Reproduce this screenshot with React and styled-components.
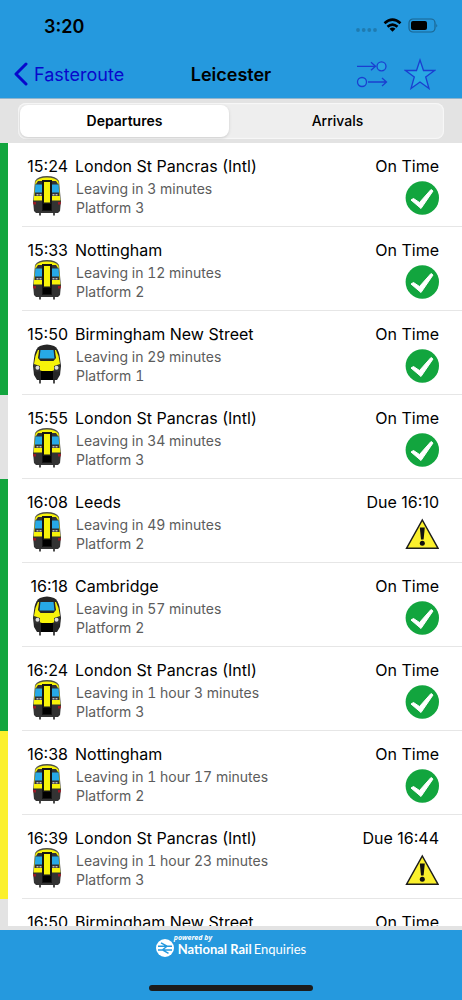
import React, { useState } from "react";
import styled, { createGlobalStyle } from "styled-components";

const services = [
  { time: "15:24", to: "London St Pancras (Intl)", leaving: "3 minutes", platform: 3, train: "sprinter", line: "#12a53e" },
  { time: "15:33", to: "Nottingham", leaving: "12 minutes", platform: 2, train: "sprinter", line: "#12a53e" },
  { time: "15:50", to: "Birmingham New Street", leaving: "29 minutes", platform: 1, train: "turbostar", line: "#12a53e" },
  { time: "15:55", to: "London St Pancras (Intl)", leaving: "34 minutes", platform: 3, train: "sprinter", line: "#e3e3e3" },
  { time: "16:08", to: "Leeds", leaving: "49 minutes", platform: 2, train: "sprinter", line: "#12a53e", due: "16:10" },
  { time: "16:18", to: "Cambridge", leaving: "57 minutes", platform: 2, train: "turbostar", line: "#12a53e" },
  { time: "16:24", to: "London St Pancras (Intl)", leaving: "1 hour 3 minutes", platform: 3, train: "sprinter", line: "#12a53e" },
  { time: "16:38", to: "Nottingham", leaving: "1 hour 17 minutes", platform: 2, train: "sprinter", line: "#fbf02d" },
  { time: "16:39", to: "London St Pancras (Intl)", leaving: "1 hour 23 minutes", platform: 3, train: "sprinter", line: "#fbf02d", due: "16:44" },
  { time: "16:50", to: "Birmingham New Street", leaving: "1 hour 34 minutes", platform: 1, train: "turbostar", line: "#e3e3e3" },
];

// icons
const Sprinter = () => (
  <svg width="28" height="40" viewBox="0 0 28 40" aria-hidden="true">
    <path d="M2 5Q5 0 14 0T26 5L28 26H0Z" fill="#4f5045" />
    <path d="M2.5 5.500Q6 1.500 14 1.500T25.500 5.500L27.500 26H.5Z" fill="#f7f30a" />
    <path d="M5 5H23L25 8H3Z" fill="#333" />
    <path d="M2.500 8H10V20H1.500Z M18 8H25.500L26.500 20H18Z" fill="#333" />
    <path d="M2.500 8.500H9V16.500H1.800Z M19 8.500H25.500L26.200 16.500H19Z" fill="#27a9e6" />
    <path d="M3.500 18.800H8.500M19.500 18.800H24.500" stroke="#bbb" strokeWidth="1.400" strokeDasharray="2 1" />
    <path d="M0 24.500H28L27 35L25 37H3L1 35Z" fill="#333" />
    <path d="M0 26H3V28.500H.5Z M25 26H28L27.500 28.500H25Z" fill="#9b1825" />
    <path d="M9 4H19V35H9Z" fill="#151515" />
    <path d="M11 6H17V26.500H11Z" fill="#f7f30a" />
    <path d="M10 28H18V34H10Z" fill="#000" />
    <path d="M7 37V39.500M21 37V39.500" stroke="#222" strokeWidth="1.600" />
  </svg>
);

const Turbostar = () => (
  <svg width="28" height="40" viewBox="0 0 28 40" aria-hidden="true">
    <path d="M7 2Q14 -1 21 2Q25 4 26.500 11L28 22L27 31L24 36H4L1 31L0 22L1.500 11Q3 4 7 2Z" fill="#262626" />
    <path d="M5 6H23L25.500 12L27 20L24.500 25L19 27H9L3.500 25L1 20L2.500 12Z" fill="#f7f30a" />
    <path d="M6.500 3H21.500L23 14L20.500 17H7.500L5 14Z" fill="#262626" />
    <path d="M7.500 6H20.500L21.500 14.500H6.500Z" fill="#27a9e6" />
    <path d="M1 20L7 22V27L3 28L1 26Z M27 20L21 22V27L25 28L27 26Z" fill="#333" />
    <circle cx="4.500" cy="23.700" r="2" fill="#ddd" />
    <circle cx="23.500" cy="23.700" r="2" fill="#ddd" />
    <path d="M8 27H20V36H8Z" fill="#000" />
    <path d="M7 35V39.500M21 35V39.500" stroke="#222" strokeWidth="1.600" />
  </svg>
);

const Tick = () => (
  <svg width="34" height="34" viewBox="0 0 34 34" aria-hidden="true">
    <circle cx="17.300" cy="17" r="16.700" fill="#12a53e" />
    <path
      d="M6 19L8.500 17.500L14.500 21.500L26 8.500L28 10L16 27.500Z"
      fill="#fff"
      stroke="#fff"
      strokeLinejoin="round"
    />
  </svg>
);

const Warning = () => (
  <svg width="34" height="34" viewBox="0 0 34 34" aria-hidden="true">
    <path d="M17.300 3L33 31.200H1.600Z" fill="#fbf02d" stroke="#1c1c1c" strokeWidth="1.500" />
    <path d="M14.800 10.500H19.800L18.600 22.500H16Z" fill="#111" />
    <circle cx="17.300" cy="26.300" r="2.500" fill="#111" />
  </svg>
);

const StatusIcons = () => (
  <svg width="82" height="18" viewBox="0 0 82 18" aria-hidden="true">
    <g fill="#1f7bb0">
      <circle cx="2" cy="13" r="1.900" />
      <circle cx="7.700" cy="13" r="1.900" />
      <circle cx="13.300" cy="13" r="1.900" />
      <circle cx="19" cy="13" r="1.900" />
    </g>
    <g fill="none" stroke="#000" strokeWidth="2.600">
      <path d="M28.500 6.300Q36.500 -.9 44.500 6.300" />
      <path d="M31.500 9.800Q36.500 5.400 41.500 9.800" />
    </g>
    <path d="M33.500 11.800Q36.500 9.300 39.500 11.800L36.500 14.800Z" />
    <rect x="53" y="2" width="26" height="13" rx="4" fill="none" stroke="#1b6590" strokeWidth="1.200" />
    <rect x="55" y="4" width="16" height="9" rx="2" />
    <path d="M80.300 6.500Q82 8.500 80.300 10.500Z" fill="#1b6590" />
  </svg>
);

const BackArrow = () => (
  <svg width="14" height="24" viewBox="0 0 14 24" aria-hidden="true">
    <path d="M12 2L2 12L12 22" fill="none" stroke="#0808cc" strokeWidth="3" strokeLinecap="round" strokeLinejoin="round" />
  </svg>
);

const SwapIcon = () => (
  <svg width="32" height="28" viewBox="0 0 32 28" fill="none" stroke="#1b3fd0" strokeWidth="1.300" aria-hidden="true">
    <path d="M1 6.300H19M15 2.300L19.500 6.300L15 10.300M12 22H30M26 18L30.500 22L26 26" />
    <circle cx="25.500" cy="6.300" r="4.500" fill="#2aa5e2" />
    <circle cx="6" cy="22" r="4.500" fill="#2aa5e2" />
  </svg>
);

const StarIcon = () => (
  <svg width="32" height="32" viewBox="0 0 32 32" aria-hidden="true">
    <path
      d="M16 2L19.500 12.500H30.500L21.700 19L25 30.500L16 24L7 30.500L10.300 19L1.500 12.500H12.500Z"
      fill="#2aa9e4"
      stroke="#1b3fd0"
      strokeWidth="1.300"
    />
  </svg>
);

const RailLogo = () => (
  <svg width="18" height="18" viewBox="0 0 18 18" aria-hidden="true">
    <circle cx="9" cy="9" r="9" fill="#fff" />
    <path d="M2 7.200H16M2 11H16M5 3.800L11 7.200L6.500 11L12.500 14.400" fill="none" stroke="#2599de" strokeWidth="1.500" />
  </svg>
);

const Service = ({ service }) => (
  <Row>
    <LineBar $color={service.line} />
    <RowBody>
      <TimeColumn>
        <Title as="time">{service.time}</Title>
        {service.train === "sprinter" ? <Sprinter /> : <Turbostar />}
      </TimeColumn>
      <Details>
        <Title>{service.to}</Title>
        <Info>
          <p>Leaving in {service.leaving}</p>
          <p>Platform {service.platform}</p>
        </Info>
      </Details>
      <Status>
        <Title>{service.due ? `Due ${service.due}` : "On Time"}</Title>
        {service.due ? <Warning /> : <Tick />}
      </Status>
    </RowBody>
  </Row>
);

const App = () => {
  const [tab, setTab] = useState("Departures");

  return (
    <Screen>
      <GlobalStyle />
      <Header>
        <StatusBar>
          <Clock>3:20</Clock>
          <StatusIcons />
        </StatusBar>
        <NavBar>
          <BackLink href="#">
            <BackArrow />
            Fasteroute
          </BackLink>
          <Heading>Leicester</Heading>
          <Actions>
            <IconButton aria-label="Change direction">
              <SwapIcon />
            </IconButton>
            <IconButton aria-label="Add to favourites">
              <StarIcon />
            </IconButton>
          </Actions>
        </NavBar>
      </Header>
      <TabBar>
        <Segments>
          {["Departures", "Arrivals"].map((name) => (
            <Segment
              key={name}
              $active={tab === name}
              aria-pressed={tab === name}
              onClick={() => setTab(name)}
            >
              {name}
            </Segment>
          ))}
        </Segments>
      </TabBar>
      <Board>
        {services.map((service) => (
          <Service key={service.time} service={service} />
        ))}
      </Board>
      <Footer>
        <Credit>
          <RailLogo />
          <div>
            <Powered>powered by</Powered>
            <Brand>
              <b>National Rail</b>
              <span>Enquiries</span>
            </Brand>
          </div>
        </Credit>
        <HomeBar />
      </Footer>
    </Screen>
  );
};

export default App;

// styles
const GlobalStyle = createGlobalStyle`
  * {
    box-sizing: border-box;
  }
  body {
    margin: 0;
    font-family: Inter, "Liberation Sans", sans-serif;
    color: #000;
    background-color: #e3e3e3;
  }
  p, h1, ul {
    margin: 0;
    padding: 0;
  }
  svg {
    display: block;
    flex-shrink: 0;
  }
  button {
    border: none;
    padding: 0;
    background: none;
    font-family: inherit;
    color: inherit;
    cursor: pointer;
  }
`;
const Screen = styled.div`
  display: flex;
  flex-direction: column;
  height: 100vh;
`;
const Header = styled.header`
  background-color: #2599de;
  border-bottom: 1px solid #8fb4cc;
`;
const StatusBar = styled.div`
  display: flex;
  justify-content: space-between;
  align-items: center;
  height: 50px;
  padding: 2px 24px 0 44px;
`;
const Clock = styled.span`
  font-size: 18px;
  font-weight: 600;
`;
const NavBar = styled.nav`
  display: grid;
  grid-template-columns: 1fr auto 1fr;
  align-items: center;
  height: 48px;
  padding: 0 14px;
`;
const BackLink = styled.a`
  display: flex;
  align-items: center;
  gap: 6px;
  font-size: 18px;
  color: #0808cc;
  text-decoration: none;
`;
const Heading = styled.h1`
  font-size: 18px;
  font-weight: 600;
`;
const Actions = styled.div`
  display: flex;
  justify-content: flex-end;
  align-items: center;
  gap: 16px;
  padding-right: 12px;
`;
const IconButton = styled.button`
  display: flex;
`;
const TabBar = styled.div`
  padding: 4px 18px;
  background-color: #e3e3e3;
`;
const Segments = styled.div`
  display: flex;
  gap: 4px;
  height: 36px;
  padding: 2px;
  border-radius: 8px;
  background-color: #eee;
  box-shadow: inset 0 0 1px 1px #f8f8f8;
`;
const Segment = styled.button`
  flex: 1;
  padding-bottom: 2px;
  border-radius: 8px;
  font-size: 14px;
  font-weight: ${(props) => (props.$active ? 600 : 500)};
  background-color: ${(props) => (props.$active ? "#fff" : "transparent")};
  box-shadow: ${(props) => (props.$active ? "0 1px 3px #ccc" : "none")};
`;
const Board = styled.ul`
  flex: 1;
  min-height: 0;
  overflow-y: auto;
  scrollbar-width: none;
  list-style: none;
  background-color: #fff;
`;
const Row = styled.li`
  display: flex;
`;
const LineBar = styled.div`
  width: 8px;
  background-color: ${(props) => props.$color};
`;
const RowBody = styled.div`
  flex: 1;
  display: flex;
  height: 84px;
  margin-left: 14px;
  padding: 13px 23px 0 0;
  border-bottom: 1px solid #e6e6e6;
`;
const TimeColumn = styled.div`
  display: flex;
  flex-direction: column;
  align-items: flex-end;
  width: 46px;

  svg {
    margin-right: 7px;
  }
`;
const Title = styled.p`
  font-size: 16px;
  line-height: 20px;
  white-space: nowrap;
`;
const Details = styled.div`
  flex: 1;
  padding-left: 7px;
`;
const Info = styled.div`
  padding: 3px 0 0 1px;
  font-size: 14px;
  line-height: 19px;
  color: #5c5c5c;
  font-variant-numeric: tabular-nums;
`;
const Status = styled.div`
  display: flex;
  flex-direction: column;
  align-items: flex-end;
  gap: 5px;
`;
const Footer = styled.footer`
  display: flex;
  flex-direction: column;
  justify-content: space-between;
  align-items: center;
  height: 74px;
  padding: 4px 0 9px;
  border-top: 4px solid #e3e3e3;
  background-color: #2599de;
`;
const Credit = styled.div`
  display: flex;
  align-items: flex-end;
  color: #fff;
  font-family: Lato, sans-serif;
`;
const Powered = styled.p`
  font-family: "Open Sans", sans-serif;
  font-size: 7px;
  line-height: 8px;
  font-weight: 700;
  font-style: italic;
`;
const Brand = styled.p`
  display: flex;
  gap: 2px;
  padding-left: 4px;
  font-size: 13px;
  line-height: 15px;
`;
const HomeBar = styled.div`
  width: 164px;
  height: 6px;
  border-radius: 3px;
  background-color: #1c1c1c;
`;
